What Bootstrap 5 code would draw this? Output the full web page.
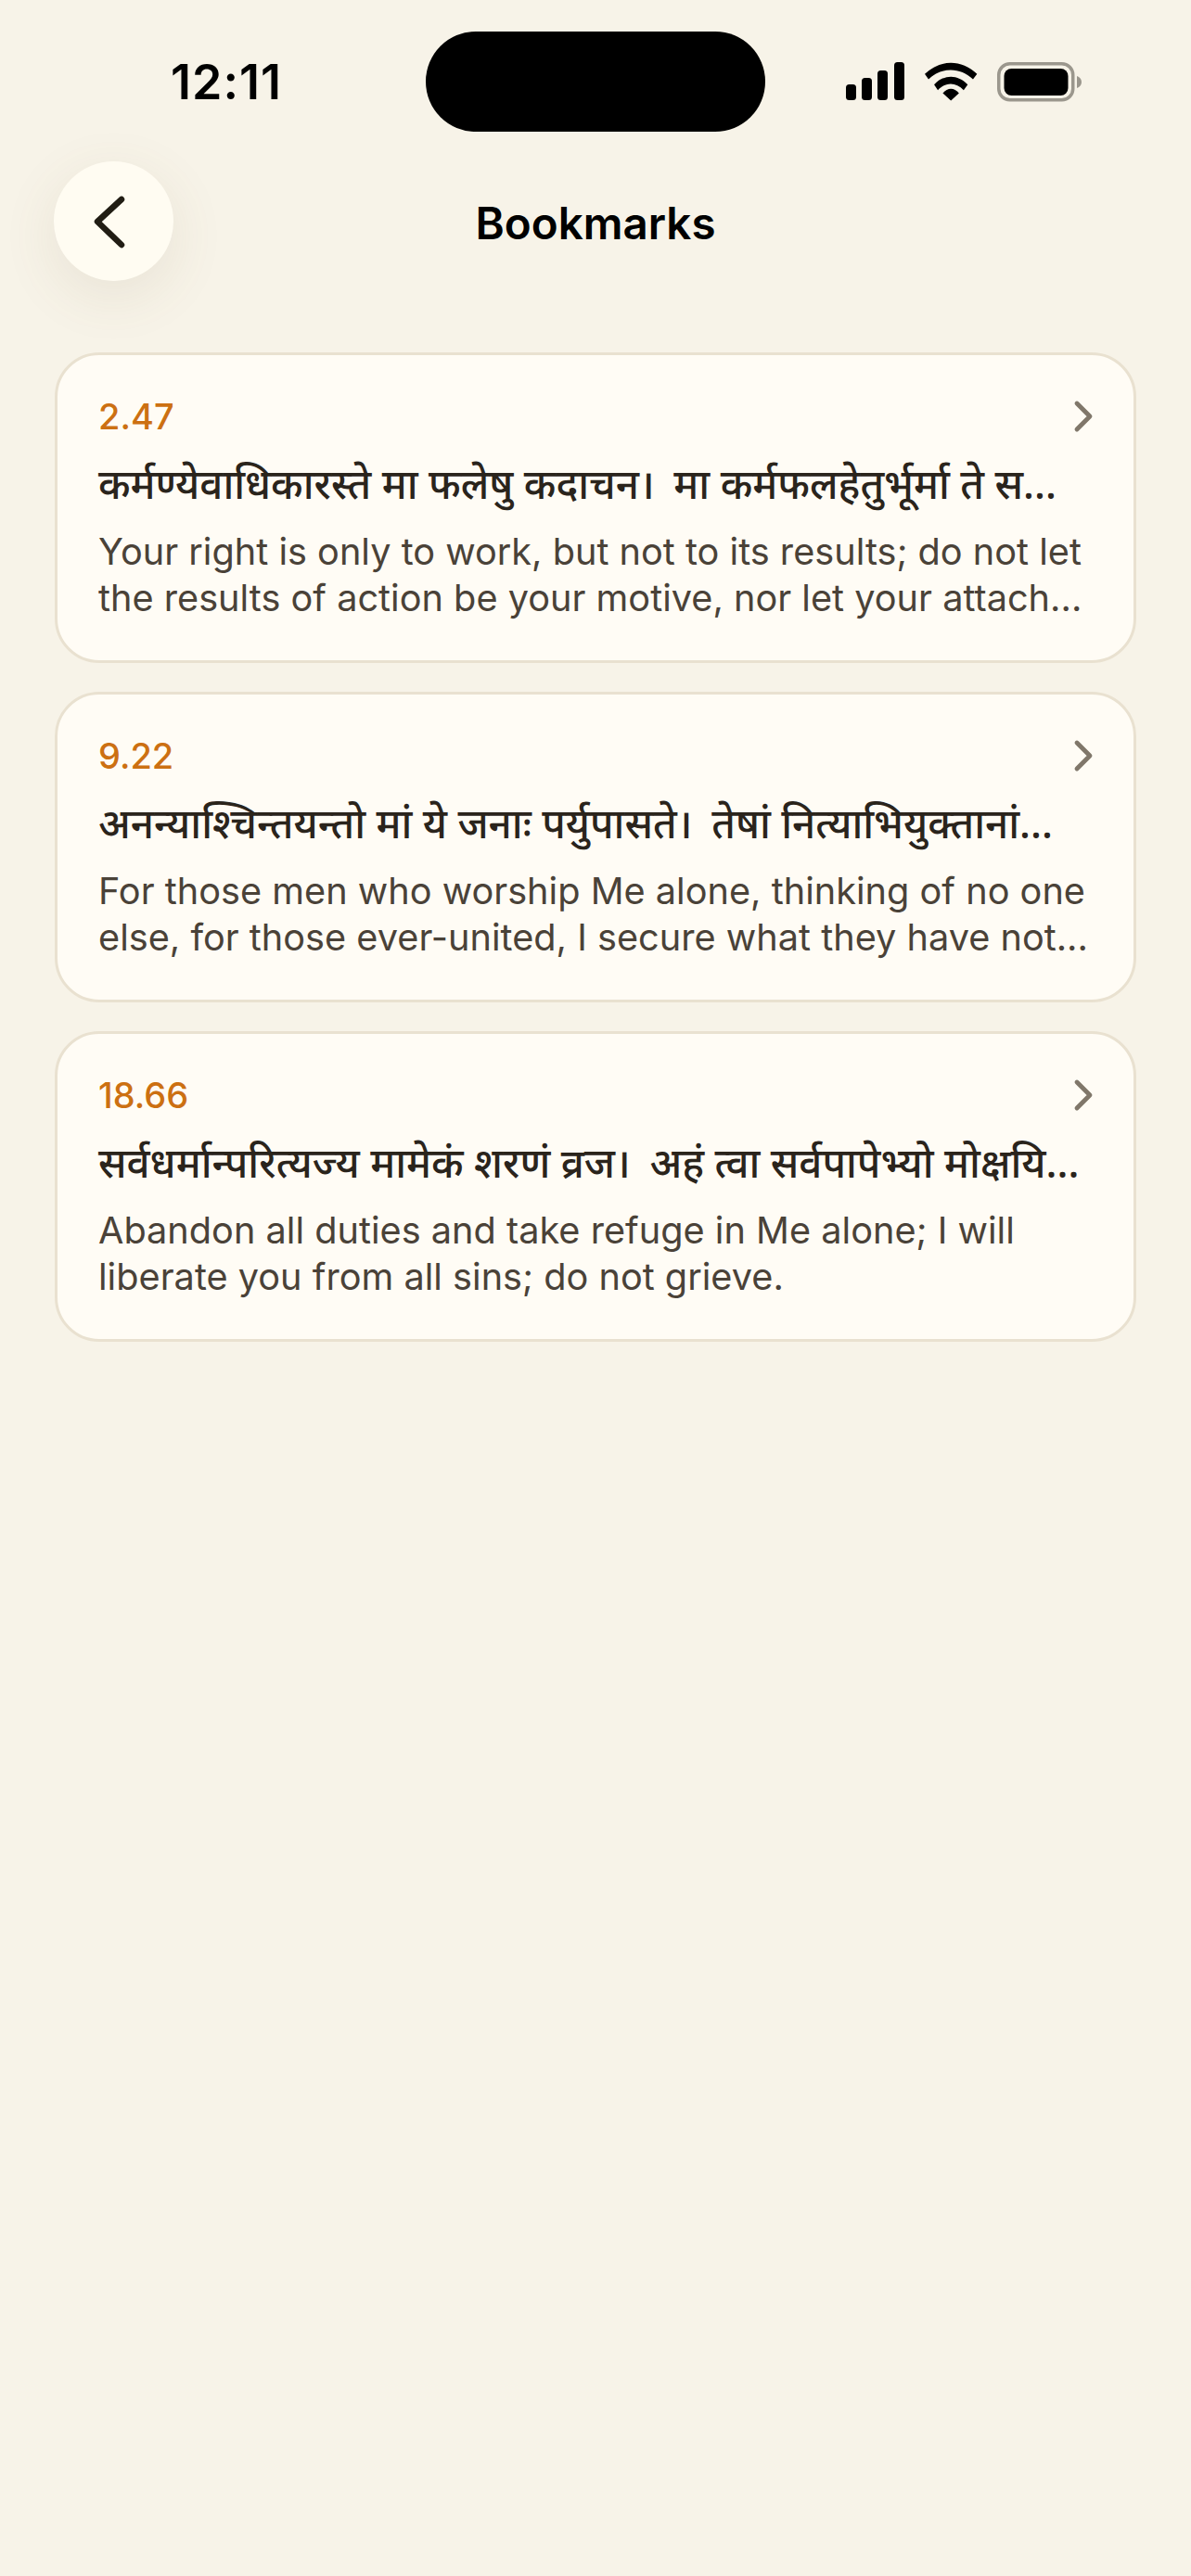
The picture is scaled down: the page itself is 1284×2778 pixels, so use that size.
<!DOCTYPE html>
<html lang="en">
<head>
<meta charset="utf-8">
<title>Bookmarks</title>
<link href="https://cdn.jsdelivr.net/npm/bootstrap@5.3.0/dist/css/bootstrap.min.css" rel="stylesheet">
<style>
html,body{margin:0;height:100%}
body{background:#f7f3e8;font-family:Inter,"Noto Sans","Liberation Sans",sans-serif;color:#000;width:1284px;height:2778px;overflow:hidden}
.status-row{padding-top:34px;height:142px}
.clock{width:459px;padding-left:184px;font-size:52px;font-weight:600;line-height:108px;letter-spacing:1px;height:108px;margin-top:1px}
.island{width:366px;height:108px;border-radius:54px;background:#000}
.status-icons{padding-left:87px;padding-top:33px;height:108px}
.icon-gap{margin-left:22px}
.icon-gap-b{margin-left:21px}
.nav-row{margin-top:32px;padding:0 58px;height:129px}
.back-btn{width:129px;height:129px;border-radius:50%;background:#fffcf2;border:0;box-shadow:0 16px 60px rgba(120,100,60,.11);flex:none;padding:0}
.nav-space{width:129px;flex:none}
.page-title{font-size:47.500px;font-weight:600;margin:4px 0 0;line-height:1.2}
.verse-list{margin-top:77px;padding:0 59px;gap:31px}
.verse-card{background:#fffcf5;border:3px solid #e9e1d0;border-radius:48px;height:335px}
.verse-body{padding:36px 39px 0 44px}
.verse-num{font-size:38px;font-weight:500;color:#cc7012;line-height:60px}
.verse-sa{font-size:44px;font-weight:500;color:#2a241c;line-height:58px;margin-top:13px;font-family:"Noto Sans",Inter,sans-serif}
.danda-gap{margin-right:9px}
.verse-en{font-size:39.700px;font-weight:400;color:#4a4238;line-height:50px;margin-top:20px}
</style>
</head>
<body>
<div class="status-row d-flex">
  <div class="clock">12:11</div>
  <div class="island"></div>
  <div class="status-icons d-flex align-items-start">
    <svg width="63" height="41" viewBox="0 0 63 41" fill="#000"><rect x="0" y="24" width="11" height="17" rx="3.5"/><rect x="17" y="17" width="11" height="24" rx="3.5"/><rect x="34" y="9" width="11" height="32" rx="3.5"/><rect x="52" y="0" width="11" height="41" rx="3.5"/></svg>
    <svg class="icon-gap" width="57" height="42" viewBox="350 80 170 125" fill="#000"><path d="M350 118C400 70 468 70 518 118L505 135C465 95 402 95 362 135Z"/><path d="M380 152C412 118 456 118 488 152L475 170C450 143 417 143 392 170Z"/><path d="M408 180C423 161 445 161 460 180L434 204Z"/></svg>
    <svg class="icon-gap-b" width="91" height="43" viewBox="0 0 91 43"><rect x="1.75" y="1.75" width="80" height="39" rx="12" fill="none" stroke="#9b978d" stroke-width="3.5"/><rect x="7.5" y="7" width="69" height="29" rx="8" fill="#000"/><path d="M86 15c3 1 5 3.500 5 6.500s-2 5.500-5 6.500z" fill="#9b978d"/></svg>
  </div>
</div>

<div class="nav-row d-flex align-items-center">
  <button class="back-btn d-flex align-items-center justify-content-center" type="button" aria-label="Back">
    <svg width="129" height="129" viewBox="0 0 129 129" fill="none" stroke="#211d14" stroke-width="6.500" stroke-linecap="round" stroke-linejoin="round"><path d="M73 41L47 65L73 90"/></svg>
  </button>
  <h1 class="page-title flex-grow-1 text-center">Bookmarks</h1>
  <div class="nav-space"></div>
</div>

<div class="verse-list d-flex flex-column">
  <div class="card verse-card">
    <div class="card-body verse-body">
      <div class="d-flex justify-content-between align-items-center">
        <span class="verse-num">2.47</span>
        <svg width="28" height="38" viewBox="0 0 28 38" fill="none" stroke="#80776a" stroke-width="4.800" stroke-linecap="round" stroke-linejoin="round"><path d="M6 5L20 19L6 33"/></svg>
      </div>
      <div class="verse-sa text-nowrap">कर्मण्येवाधिकारस्ते मा फलेषु कदाचन<span class="danda-gap">।</span> मा कर्मफलहेतुर्भूर्मा ते स...</div>
      <div class="verse-en">Your right is only to work, but not to its results; do not let the results of action be your motive, nor let your attach...</div>
    </div>
  </div>
  <div class="card verse-card">
    <div class="card-body verse-body">
      <div class="d-flex justify-content-between align-items-center">
        <span class="verse-num">9.22</span>
        <svg width="28" height="38" viewBox="0 0 28 38" fill="none" stroke="#80776a" stroke-width="4.800" stroke-linecap="round" stroke-linejoin="round"><path d="M6 5L20 19L6 33"/></svg>
      </div>
      <div class="verse-sa text-nowrap">अनन्याश्चिन्तयन्तो मां ये जनाः पर्युपासते<span class="danda-gap">।</span> तेषां नित्याभियुक्तानां...</div>
      <div class="verse-en">For those men who worship Me alone, thinking of no one else, for those ever-united, I secure what they have not...</div>
    </div>
  </div>
  <div class="card verse-card">
    <div class="card-body verse-body">
      <div class="d-flex justify-content-between align-items-center">
        <span class="verse-num">18.66</span>
        <svg width="28" height="38" viewBox="0 0 28 38" fill="none" stroke="#80776a" stroke-width="4.800" stroke-linecap="round" stroke-linejoin="round"><path d="M6 5L20 19L6 33"/></svg>
      </div>
      <div class="verse-sa text-nowrap">सर्वधर्मान्परित्यज्य मामेकं शरणं व्रज<span class="danda-gap">।</span> अहं त्वा सर्वपापेभ्यो मोक्षयि...</div>
      <div class="verse-en">Abandon all duties and take refuge in Me alone; I will liberate you from all sins; do not grieve.</div>
    </div>
  </div>
</div>
<script src="https://cdn.jsdelivr.net/npm/bootstrap@5.3.0/dist/js/bootstrap.bundle.min.js"></script>
</body>
</html>
